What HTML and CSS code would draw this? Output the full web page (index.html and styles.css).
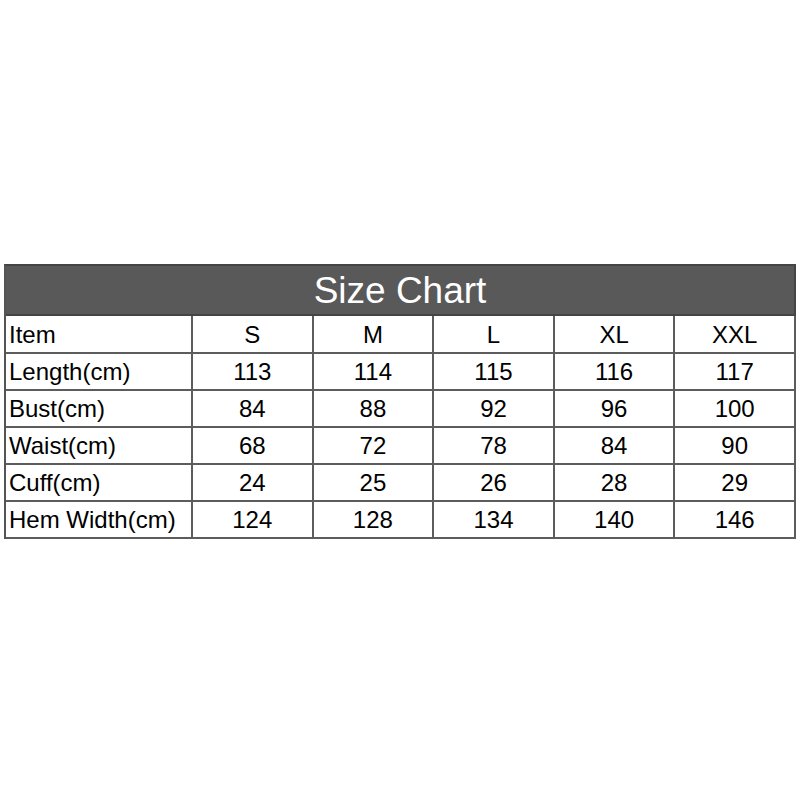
FILE: index.html
```html
<!DOCTYPE html>
<html>
<head>
<meta charset="utf-8">
<link rel="stylesheet" href="styles.css">
</head>
<body>
<div class="page">
  <div class="chart">
    <div class="title">Size Chart</div>
    <div class="cell label">Item</div>
    <div class="cell">S</div>
    <div class="cell">M</div>
    <div class="cell">L</div>
    <div class="cell">XL</div>
    <div class="cell">XXL</div>

    <div class="cell label">Length(cm)</div>
    <div class="cell">113</div>
    <div class="cell">114</div>
    <div class="cell">115</div>
    <div class="cell">116</div>
    <div class="cell">117</div>

    <div class="cell label">Bust(cm)</div>
    <div class="cell">84</div>
    <div class="cell">88</div>
    <div class="cell">92</div>
    <div class="cell">96</div>
    <div class="cell">100</div>

    <div class="cell label">Waist(cm)</div>
    <div class="cell">68</div>
    <div class="cell">72</div>
    <div class="cell">78</div>
    <div class="cell">84</div>
    <div class="cell">90</div>

    <div class="cell label">Cuff(cm)</div>
    <div class="cell">24</div>
    <div class="cell">25</div>
    <div class="cell">26</div>
    <div class="cell">28</div>
    <div class="cell">29</div>

    <div class="cell label">Hem Width(cm)</div>
    <div class="cell">124</div>
    <div class="cell">128</div>
    <div class="cell">134</div>
    <div class="cell">140</div>
    <div class="cell">146</div>
  </div>
</div>
</body>
</html>
```
FILE: styles.css
```css
html, body {
  margin: 0;
  padding: 0;
  background: #ffffff;
}

.page {
  width: 800px;
  height: 800px;
  padding: 264px 0 0 4px;
  box-sizing: border-box;
}

.chart {
  width: 792px;
  box-sizing: border-box;
  display: grid;
  grid-template-columns: 187px repeat(5, 1fr);
  grid-template-rows: 50px 38px repeat(5, 37px);
  border-top: 2px solid #444444;
  border-left: 2px solid #555555;
  font-family: "Liberation Sans", Arial, sans-serif;
  color: #000000;
}

.title {
  grid-column: 1 / -1;
  background: #595959;
  color: #ffffff;
  font-size: 37px;
  display: flex;
  align-items: center;
  justify-content: center;
  border-right: 2px solid #444444;
  border-bottom: 2px solid #444444;
  padding-top: 2px;
  box-sizing: border-box;
}

.cell {
  font-size: 24px;
  display: flex;
  align-items: center;
  justify-content: center;
  border-right: 2px solid #5c5c5c;
  border-bottom: 2px solid #5c5c5c;
  box-sizing: border-box;
  padding-top: 1px;
}

.label {
  justify-content: flex-start;
  padding-left: 3px;
}
```
